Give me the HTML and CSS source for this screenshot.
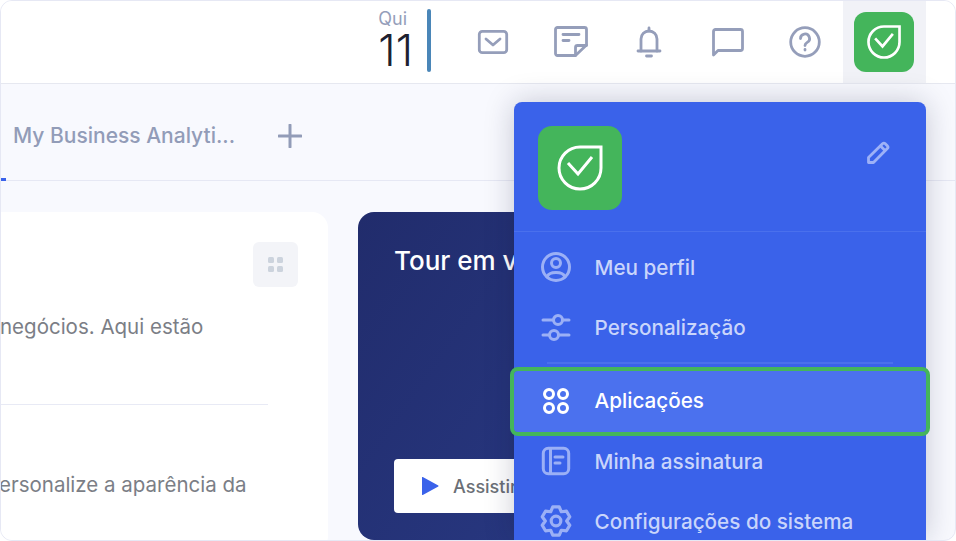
FILE: index.html
```html
<!DOCTYPE html>
<html lang="pt-BR">
<head>
  <meta charset="UTF-8" />
  <title>Painel</title>
  <link rel="stylesheet" href="styles.css">
</head>
<body>
  <div class="app">
    <header class="topbar">
      <div class="date">
        <div class="date-text">
          <span class="date-day">Qui</span>
          <span class="date-num">11</span>
        </div>
        <div class="date-bar"></div>
      </div>

      <button class="top-btn">
        <svg width="34" height="34" viewBox="0 0 34 34"><rect x="3.3" y="6.3" width="27.4" height="21.4" rx="3"/><path d="M10 14l7 6 7-6"/></svg>
      </button>
      <button class="top-btn">
        <svg width="36" height="34" viewBox="0 0 36 34"><path d="M22.500 30.500H4.500a2 2 0 0 1-2-2V4.500a2 2 0 0 1 2-2h27a2 2 0 0 1 2 2V20z"/><path d="M22.500 30.500V22.500a2 2 0 0 1 2-2h9"/><path d="M10 9.500h16M10 15.500h6"/></svg>
      </button>
      <button class="top-btn">
        <svg width="30" height="34" viewBox="0 0 30 34"><path d="M7 26V14a8 8 0 0 1 16 0v12"/><path d="M4 26h22M15 3v3M12.500 31h5"/></svg>
      </button>
      <button class="top-btn">
        <svg width="34" height="34" viewBox="0 0 34 34"><path d="M3.500 30V6.500a2 2 0 0 1 2-2h25a2 2 0 0 1 2 2v17a2 2 0 0 1-2 2H8z"/></svg>
      </button>
      <button class="top-btn top-btn-last">
        <svg width="34" height="34" viewBox="0 0 34 34"><circle cx="17" cy="17" r="14.300"/><path d="M12.500 13.500a4.500 4.500 0 1 1 6.700 3.900c-1.500.9-2.200 1.600-2.200 3.100"/><path d="M17 24.500v.5"/></svg>
      </button>

      <div class="account-tile">
        <div class="shield shield-small">
          <svg width="34" height="34" viewBox="0 0 46 46"><path d="M23 2h21v21a21 21 0 1 1-21-21z"/><path d="M11 18l10 11 14-17"/></svg>
        </div>
      </div>
    </header>

    <nav class="tabs">
      <div class="tab-active"></div>
      <div class="tab">My Business Analyti...</div>
      <button class="tab-add">
        <svg width="24" height="24" viewBox="0 0 24 24"><path d="M12 1v22M1 12h22"/></svg>
      </button>
    </nav>

    <main class="content">
      <section class="welcome-card">
        <div class="welcome-top">
          <div class="grid-btn"><span></span><span></span><span></span><span></span></div>
        </div>
        <p class="welcome-line welcome-line-a">negócios. Aqui estão</p>
        <div class="welcome-rule"></div>
        <p class="welcome-line welcome-line-b">Personalize a aparência da</p>
      </section>

      <section class="tour-card">
        <h2 class="tour-title">Tour em vídeo</h2>
        <button class="tour-btn">
          <svg width="18" height="20" viewBox="0 0 18 20"><path d="M1 1.500v17a.5.5 0 0 0 .8.400l15.500-8.500a.5.5 0 0 0 0-.8L1.800 1.100a.5.5 0 0 0-.8.400z"/></svg>
          Assistir agora
        </button>
      </section>
    </main>

    <aside class="menu">
      <div class="menu-head">
        <div class="shield shield-big">
          <svg width="46" height="46" viewBox="0 0 46 46"><path d="M23 2h21v21a21 21 0 1 1-21-21z"/><path d="M11 18l10 11 14-17"/></svg>
        </div>
        <button class="edit-btn">
          <svg width="24" height="24" viewBox="0 0 24 24"><path d="M2.500 21.500v-5L16.500 2.800a2 2 0 0 1 2.800 0l2 2a2 2 0 0 1 0 2.800L7.500 21.500z"/><path d="M14.500 5l4.500 4.500"/></svg>
        </button>
      </div>

      <div class="menu-list">
        <a class="menu-item">
          <svg width="32" height="32" viewBox="0 0 32 32"><circle cx="16" cy="16" r="13.500"/><circle cx="16" cy="12" r="4.500"/><path d="M7 26c2-6 16-6 18 0"/></svg>
          Meu perfil
        </a>
        <a class="menu-item">
          <svg width="32" height="32" viewBox="0 0 32 32"><path d="M3 9h10M23 9h6M3 24h6M19 24h10"/><circle cx="18" cy="9" r="4.500"/><circle cx="14" cy="24" r="4.500"/></svg>
          Personalização
        </a>
        <div class="menu-rule"></div>
        <a class="menu-item menu-item-active">
          <svg width="32" height="32" viewBox="0 0 32 32"><circle cx="9" cy="9" r="4.500"/><circle cx="23" cy="9" r="4.500"/><circle cx="9" cy="23" r="4.500"/><circle cx="23" cy="23" r="4.500"/></svg>
          Aplicações
        </a>
        <a class="menu-item">
          <svg width="32" height="32" viewBox="0 0 32 32"><rect x="3.300" y="3.300" width="25.400" height="25.400" rx="5"/><path d="M10.500 3.500v25M15 12h8M15 18h5"/></svg>
          Minha assinatura
        </a>
        <a class="menu-item">
          <svg width="32" height="32" viewBox="0 0 30 30"><path d="M11.960 1.850H18.040L20 6.340 24.870 5.790 27.910 11.050 25 15 27.910 18.950 24.870 24.210 20 23.660 18.040 28.150H11.960L10 23.660 5.130 24.210 2.090 18.950 5 15 2.090 11.050 5.130 5.790 10 6.340z"/><circle cx="15" cy="15" r="4.500"/></svg>
          Configurações do sistema
        </a>
      </div>
    </aside>
  </div>
</body>
</html>
```

FILE: styles.css
```css
* {
  box-sizing: border-box;
}

body {
  margin: 0;
  background: #fff;
  font-family: 'Inter', sans-serif;
}

button {
  background: none;
  border: none;
  padding: 0;
  font-family: inherit;
}

svg {
  display: block;
  fill: none;
  stroke-linecap: round;
  stroke-linejoin: round;
}

.app {
  position: relative;
  width: 956px;
  height: 541px;
  overflow: hidden;
  background: #f8f9fe;
  border: 1px solid #e6e8f4;
  border-radius: 12px;
}

.topbar {
  display: flex;
  justify-content: flex-end;
  align-items: center;
  height: 83px;
  padding-right: 29px;
  background: #fff;
  border-bottom: 1px solid #e6e8f0;
}

.date {
  display: flex;
  align-self: flex-start;
  align-items: flex-start;
  margin-right: 23px;
  padding-top: 8px;
}

.date-text {
  display: flex;
  flex-direction: column;
  margin-right: 14px;
}

.date-day {
  font-size: 18px;
  line-height: 20px;
  color: #959eba;
}

.date-num {
  font-size: 44px;
  font-weight: 300;
  line-height: 42px;
  color: #1d2130;
}

.date-bar {
  width: 4px;
  height: 63px;
  border-radius: 2px;
  background: #4a86b8;
}

.top-btn {
  display: flex;
  justify-content: center;
  align-items: center;
  width: 78px;
  height: 82px;
}

.top-btn-last {
  width: 77px;
}

.top-btn svg {
  stroke: #959eba;
  stroke-width: 2.8;
}

.account-tile {
  display: flex;
  justify-content: center;
  align-items: center;
  width: 83px;
  height: 82px;
  padding-right: 1px;
  background: #f1f2f7;
}

.shield {
  display: flex;
  justify-content: center;
  align-items: center;
  background: #44b55b;
}

.shield svg {
  stroke: #fff;
  stroke-linecap: butt;
  stroke-linejoin: miter;
}

.shield-small {
  width: 60px;
  height: 60px;
  border-radius: 12px;
}

.shield-small svg {
  stroke-width: 3.600;
}

.shield-big {
  width: 84px;
  height: 84px;
  border-radius: 14px;
}

.shield-big svg {
  stroke-width: 3;
}

.tabs {
  display: flex;
  align-items: center;
  height: 97px;
  padding-top: 7px;
  border-bottom: 1px solid #e6e8f4;
}

.tab-active {
  align-self: stretch;
  width: 5px;
  margin-top: -7px;
  margin-bottom: -1px;
  border-bottom: 3px solid #3a62ea;
}

.tab {
  margin-left: 7px;
  font-size: 21px;
  font-weight: 500;
  color: #929cb8;
}

.tab-add {
  margin-left: 43px;
}

.tab-add svg {
  stroke: #929cb8;
  stroke-width: 3;
}

.content {
  display: flex;
  gap: 30px;
  padding-top: 31px;
}

.welcome-card {
  flex-shrink: 0;
  width: 348px;
  height: 340px;
  margin-left: -21px;
  padding-top: 30px;
  overflow: hidden;
  background: #fff;
  border-radius: 16px;
}

.welcome-top {
  display: flex;
  justify-content: flex-end;
  padding-right: 30px;
}

.grid-btn {
  display: grid;
  grid-template-columns: 6px 6px;
  grid-auto-rows: 6px;
  gap: 3px;
  justify-content: center;
  align-content: center;
  width: 45px;
  height: 45px;
  border-radius: 6px;
  background: #f3f4f8;
}

.grid-btn span {
  border-radius: 1.500px;
  background: #ccd3dd;
}

.welcome-line {
  margin: 0;
  font-size: 20.500px;
  line-height: 30px;
  color: #7b7e86;
  white-space: nowrap;
}

.welcome-line-a {
  margin: 25px 0 0 20px;
}

.welcome-line-b {
  margin: 65px 0 0 6px;
}

.welcome-rule {
  height: 1px;
  margin: 62px 60px 0 0;
  background: #e8eaf5;
}

.tour-card {
  flex-shrink: 0;
  width: 300px;
  height: 328px;
  padding: 31px 36px;
  border-radius: 16px;
  background: linear-gradient(125deg, #212c6c, #293a85);
}

.tour-title {
  margin: 0;
  font-size: 26px;
  font-weight: 500;
  line-height: 36px;
  color: #fff;
  white-space: nowrap;
}

.tour-btn {
  display: flex;
  align-items: center;
  gap: 14px;
  width: 240px;
  height: 54px;
  margin-top: 180px;
  padding-left: 27px;
  border-radius: 4px;
  background: #fff;
  font-size: 18px;
  font-weight: 500;
  color: #6b6f76;
}

.tour-btn svg {
  fill: #3a62ea;
}

.menu {
  position: absolute;
  top: 101px;
  left: 513px;
  bottom: 0;
  width: 412px;
  border-radius: 8px 8px 0 0;
  background: #3a62ea;
  box-shadow: 0 0 30px rgba(20, 25, 60, 0.22);
}

.menu-head {
  display: flex;
  justify-content: space-between;
  height: 130px;
  padding: 24px 36px 0 24px;
  border-bottom: 1px solid #4a70ed;
}

.edit-btn {
  align-self: flex-start;
  margin-top: 15px;
}

.edit-btn svg {
  stroke: #9db1f7;
  stroke-width: 2.800;
}

.menu-list {
  padding-top: 5px;
}

.menu-item {
  display: flex;
  align-items: center;
  gap: 22.500px;
  height: 60px;
  padding-left: 26px;
  font-size: 20.700px;
  font-weight: 500;
  color: #c9d5fb;
}

.menu-item svg {
  stroke: #9bb0f6;
  stroke-width: 3;
}

.menu-item-active {
  height: 61px;
  margin-bottom: -1px;
  padding-bottom: 2px;
  border-radius: 4px;
  background: #4b71ee;
  color: #fff;
  outline: 4px solid #44b55b;
}

.menu-item-active svg {
  stroke: #fff;
}

.menu-rule {
  height: 2px;
  margin: 5px 33px 7px;
  background: #4a70ed;
}
```
